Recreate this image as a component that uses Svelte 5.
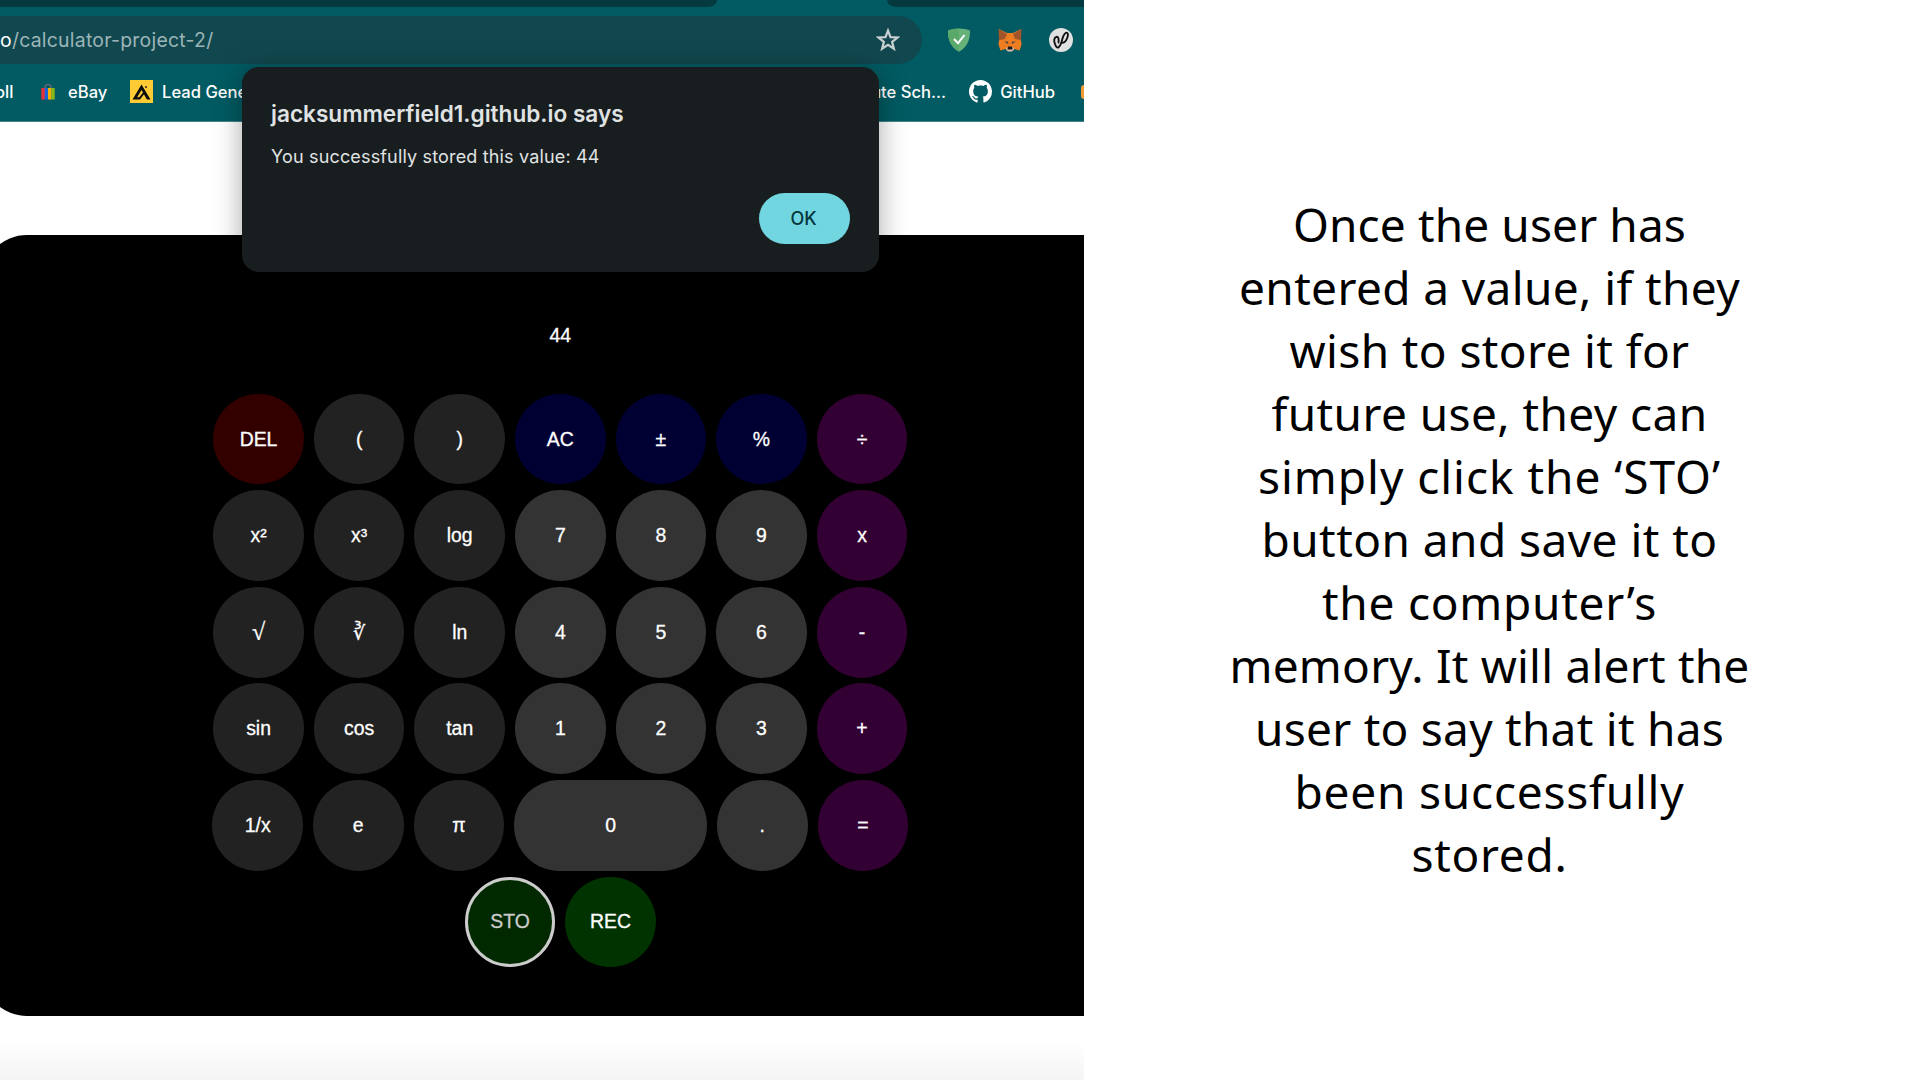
<script>
  const keys = [
    [['DEL', 'red'], ['(', 'fn'], [')', 'fn'], ['AC', 'blue'], ['±', 'blue'], ['%', 'blue'], ['÷', 'op']],
    [['x²', 'fn'], ['x³', 'fn'], ['log', 'fn'], ['7', 'num'], ['8', 'num'], ['9', 'num'], ['x', 'op']],
    [['√', 'fn root'], ['∛', 'fn cube'], ['ln', 'fn'], ['4', 'num'], ['5', 'num'], ['6', 'num'], ['-', 'op']],
    [['sin', 'fn'], ['cos', 'fn'], ['tan', 'fn'], ['1', 'num'], ['2', 'num'], ['3', 'num'], ['+', 'op']],
    [['1/x', 'fn'], ['e', 'fn'], ['π', 'fn'], ['0', 'num wide'], ['.', 'num'], ['=', 'op']],
    [['STO', 'green focused'], ['REC', 'green']],
  ];

  // Line text with the width in px it occupies on the slide.
  const lines = [
    ['Once the user has', 389],
    ['entered a value, if they', 497],
    ['wish to store it for', 396],
    ['future use, they can', 432],
    ['simply click the ‘STO’', 459],
    ['button and save it to', 452],
    ['the computer’s', 331],
    ['memory. It will alert the', 516],
    ['user to say that it has', 465],
    ['been successfully', 386],
    ['stored.', 152],
  ];

  // Tracks a line out so that its ink fills the given width.
  function track(node, width) {
    const extra = (width + 4 - node.getBoundingClientRect().width) / node.textContent.length;
    node.style.letterSpacing = `${extra.toFixed(3)}px`;
  }
</script>

<main class="slide">
  <section class="browser">
    <div class="tabs"><i class="tab left"></i><i class="tab right"></i></div>
    <div class="toolbar">
      <div class="url">
        <span class="address"><b>o</b>/calculator-project-2/</span>
        <svg class="star" viewBox="0 0 24 24"><path d="M12 2.6l2.5 6.5 7 .4-5.400 4.400 1.800 6.800-5.900-3.800-5.900 3.800 1.800-6.800L2.500 9.500l7-.4z" fill="none" stroke="#c8cfd0" stroke-width="2.200" /></svg>
      </div>
      <div class="extensions">
        <svg viewBox="0 0 24 24"><path d="M12 .5c4 0 8 .7 11 2 0 9-2 16-11 21.200C3 18.500 1 11.500 1 2.500c3-1.300 7-2 11-2z" fill="#67b279" /><path d="M12 .5v23.200C3 18.500 1 11.500 1 2.500c3-1.300 7-2 11-2z" fill="#5aa86a" /><path d="M7 11l4 4.200L17.500 7" fill="none" stroke="#fff" stroke-width="2" /></svg>
        <svg viewBox="0 0 24 24"><path d="M.8 1L9 5h6l8.200-4-.6 10 1 5-2 6.500-5.200-1.500-2 2H9.600l-2-2-5.200 1.500-2-6.500 1-5z" fill="#ee7d22" /><path d="M.8 1L9 6 7 11l-5.500 1L.6 7zM23.200 1L15 6l2 5 5.500 1 .9-5z" fill="#a0552a" /><path d="M6 13.500l4 .3.300 2.200zM18 13.500l-4 .3-.3 2.200z" fill="#3a3c42" /><path d="M8.500 19.500h7l.5 2-2 2h-4l-2-2z" fill="#d5bfb2" /><path d="M10 18.500h4l.6 3H9.400z" fill="#1c1818" /></svg>
        <svg viewBox="0 0 24 24"><circle cx="12" cy="12" r="12" fill="#e0e0e0" /><path d="M9.500 14.500C10 11 9.300 8.300 7.300 8.800 4.800 9.500 4.800 13 6 16c.8 2.500 2 4 3.500 3.300 2.300-1.200 3-5 4-8.800 1-3.700 3-6.500 4.600-5.700 1.600 1 .7 4.800-1 7.400-1.300 2-3.100 3.200-4.100 2.100" fill="none" stroke="#111" stroke-width="1.900" stroke-linecap="round" /></svg>
      </div>
    </div>
    <nav class="bookmarks">
      <span class="roll">oll</span>
      <svg class="bag" viewBox="0 0 14 16"><path d="M4 5V3.500a3 3 0 0 1 6 0V5" fill="none" stroke="#6c7473" stroke-width="1.200" /><path d="M.3 4H4v11.500H.3z" fill="#e53238" /><path d="M3.700 4H7v11.500H3.700z" fill="#1764d8" /><path d="M7 4h3.500v11.500H7z" fill="#f5af02" /><path d="M10.400 4h3.300v11.500h-3.300z" fill="#86b817" /></svg>
      <span class="ebay">eBay</span>
      <svg class="lead" viewBox="0 0 23 23"><path d="M0 0h23v23H0z" fill="#fecb35" /><path d="M2.500 19.500L11.500 4.500l9 15h-3.600L11.500 10 7 17.500l2.500-.5 3.500-4.500 1 1.800-4 5.200z" fill="#0c0c0c" /><circle cx="16" cy="7" r="1" fill="#222" /></svg>
      <span>Lead Gene</span>
      <span class="school">ute Sch...</span>
      <svg class="github" viewBox="0 0 16 16"><path fill="#fff" d="M8 0C3.580 0 0 3.580 0 8c0 3.540 2.290 6.530 5.470 7.590.4.070.55-.17.55-.38 0-.19-.01-.82-.01-1.490-2.010.37-2.530-.49-2.690-.94-.09-.23-.48-.94-.82-1.130-.28-.15-.68-.52-.01-.53.63-.01 1.080.58 1.230.82.72 1.210 1.870.87 2.330.66.070-.52.28-.87.51-1.070-1.780-.2-3.640-.89-3.640-3.950 0-.87.31-1.590.82-2.150-.08-.2-.36-1.020.08-2.120 0 0 .67-.21 2.200.82.64-.18 1.320-.27 2-.27s1.360.09 2 .27c1.530-1.040 2.200-.82 2.200-.82.44 1.100.16 1.920.08 2.120.51.56.82 1.270.82 2.150 0 3.070-1.870 3.750-3.650 3.950.29.25.54.73.54 1.480 0 1.070-.01 1.930-.01 2.200 0 .21.15.46.55.38A8.010 8.010 0 0 0 16 8c0-4.420-3.580-8-8-8z" /></svg>
      <span>GitHub</span>
      <i class="clipped"></i>
    </nav>
    <div class="page">
      <div class="calculator">
        <div class="display">44</div>
        {#each keys as row}
          <div class="row">
            {#each row as [label, kind]}
              <button class="key {kind}">{label}</button>
            {/each}
          </div>
        {/each}
      </div>
    </div>
    <div class="dialog">
      <h1>jacksummerfield1.github.io says</h1>
      <p>You successfully stored this value: 44</p>
      <button class="ok">OK</button>
    </div>
  </section>
  <section class="caption">
    {#each lines as [text, width]}
      <div><span use:track={width}>{text}</span></div>
    {/each}
  </section>
</main>

<style>
  :global(body) { margin: 0; background: #fff; }
  .slide { display: flex; width: 1920px; height: 1080px; overflow: hidden; background: #fff; }
  .browser { position: relative; display: flex; flex-direction: column; width: 1084px; height: 1080px; overflow: hidden; background: #025b62; font-family: Inter, sans-serif; }
  .tabs { display: flex; justify-content: space-between; height: 7px; }
  .tab { height: 7px; background: #03393f; }
  .left { width: 717px; border-bottom-right-radius: 14px 10px; }
  .right { width: 197px; border-bottom-left-radius: 14px 10px; }
  .toolbar { display: flex; align-items: center; height: 48px; padding-top: 9px; }
  .url { box-sizing: border-box; display: flex; align-items: center; justify-content: space-between; width: 922px; height: 48px; padding-right: 22px; border-radius: 0 24px 24px 0; background: #11484f; }
  .address { color: #9db5b7; font-size: 19.400px; letter-spacing: .26px; }
  .address b { color: #fff; font-weight: 400; }
  .star { width: 24px; height: 24px; }
  .extensions { display: flex; gap: 27px; margin-left: 25px; }
  .extensions svg { width: 24px; height: 24px; }
  .bookmarks { box-sizing: border-box; display: flex; align-items: center; height: 58px; padding-bottom: 2px; border-bottom: 1px solid #40858a; color: #fff; font-size: 16.600px; font-weight: 500; white-space: nowrap; }
  .roll { width: 36px; margin-left: -5px; }
  .bag { width: 14px; height: 16px; margin: 0 13px 0 10px; }
  .ebay { width: 62px; }
  .lead { width: 23px; height: 23px; margin-right: 9px; }
  .school { margin-left: auto; margin-right: 23px; }
  .github { width: 23px; height: 23px; margin-right: 8px; }
  .clipped { width: 3px; height: 14px; margin-left: 26px; border-radius: 3px 0 0 3px; background: #f49a34; }
  .page { flex: 1; padding-top: 113px; background: linear-gradient(#fff 920px, #f4f4f4 958px); }
  .calculator { box-sizing: border-box; display: flex; flex-direction: column; align-items: center; gap: 5.900px; width: 1156.600px; height: 780.500px; margin-left: -18px; padding-top: 87.500px; border-radius: 45px; background: #000; color: #fff; font: 19.400px 'Liberation Sans', Arial, sans-serif; -webkit-text-stroke: .3px currentColor; }
  .display { height: 65.300px; line-height: 25px; }
  .row { display: flex; gap: 9.900px; height: 90.700px; }
  .key { box-sizing: border-box; width: 90.700px; height: 90.700px; padding: 0; border: 0; border-radius: 46px; color: #fff; font: inherit; -webkit-text-stroke: inherit; }
  .fn { background: #222; }
  .num { background: #333; }
  .red { background: #300; }
  .blue { background: #003; }
  .op { background: #303; }
  .green { background: #030; }
  .wide { width: 193px; }
  .focused { border: 3px solid #ccc; background: #002900; color: #ccc; }
  .root, .cube { font-family: 'Liberation Serif', serif; }
  .root { font-size: 24px; }
  .cube { font-size: 19px; }
  .dialog { position: absolute; left: 242px; top: 67px; box-sizing: border-box; display: flex; flex-direction: column; width: 637px; height: 205px; padding: 32px 29px 28px 29px; border-radius: 17px; background: #181d1f; box-shadow: 0 3px 28px rgba(0, 0, 0, .35); color: #e0e3e3; }
  h1 { margin: 0; font-size: 22.600px; line-height: 30px; font-weight: 600; white-space: nowrap; }
  p { margin: 16px 0 0; font-size: 18px; line-height: 24px; letter-spacing: .16px; white-space: nowrap; }
  .ok { align-self: flex-end; width: 91px; height: 51px; margin-top: 24px; padding: 0 2px 0 0; border: 0; border-radius: 26px; background: #72d6e1; color: #04363c; font: 500 18px Inter, sans-serif; }
  .caption { flex: 1; padding-top: 193px; margin-right: 25px; color: #000; font: 46px/63.050px 'Noto Sans', sans-serif; text-align: center; white-space: nowrap; }
</style>
